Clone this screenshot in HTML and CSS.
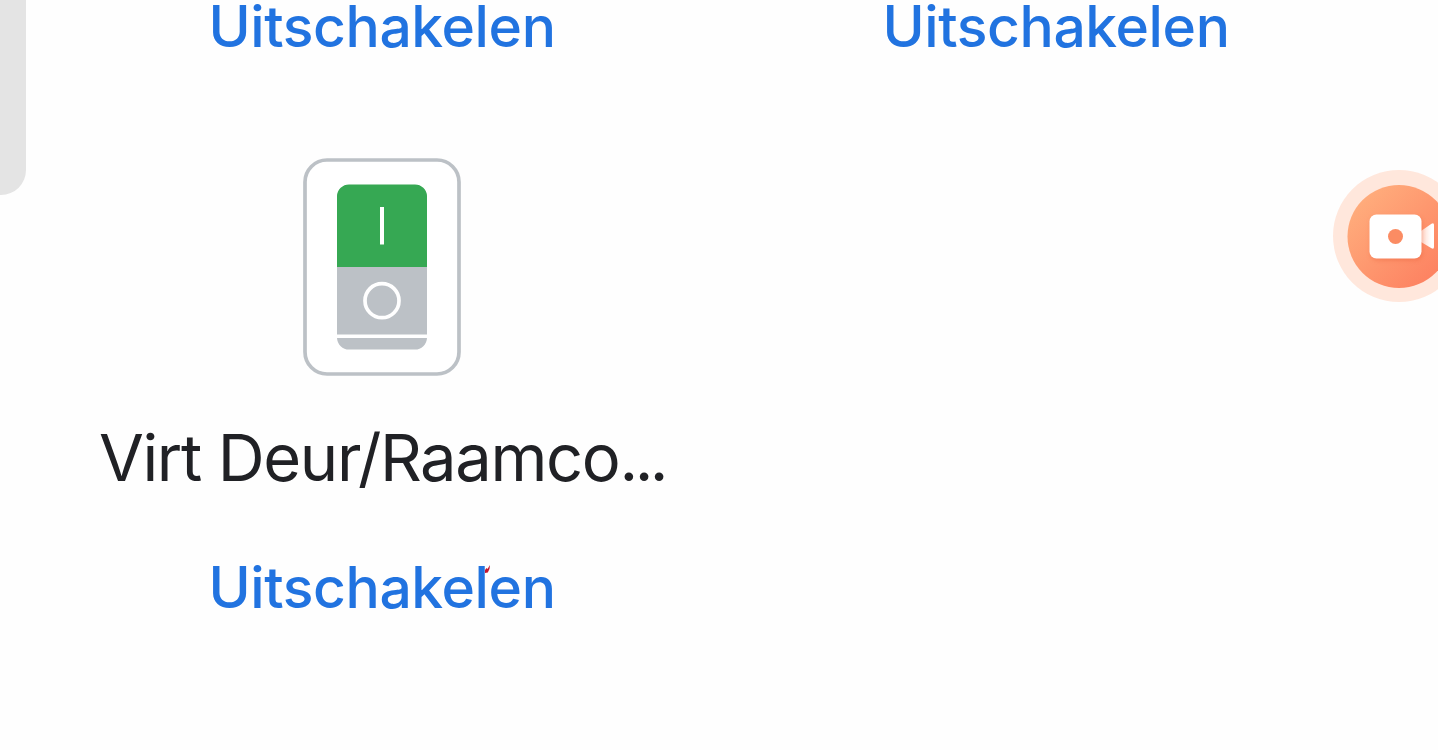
FILE: index.html
```html
<!DOCTYPE html>
<html lang="nl">
<head>
  <meta charset="UTF-8" />
  <meta name="viewport" content="width=device-width, initial-scale=1.0"/>
  <title>Apparaten</title>
  <link rel="stylesheet" href="styles.css">
</head>
<body>

  <!-- Edge panel handle -->
  <div class="edge-handle"></div>

  <!-- Devices -->
  <main class="devices">
    <div class="device">
      <a class="action">Uitschakelen</a>
    </div>
    <div class="device">
      <a class="action">Uitschakelen</a>
    </div>

    <div class="device">
      <svg class="switch-icon" viewBox="0 0 158 218">
        <rect x="2" y="2" width="154" height="214" rx="22" fill="#fff" stroke="#bcc1c6" stroke-width="3.700"/>
        <path d="M34 109V38a12 12 0 0 1 12-11.500h66a12 12 0 0 1 12 11.500v71z" fill="#36a853"/>
        <path d="M34 109h90v67.500H34z" fill="#bcc1c6"/>
        <path d="M34 180h90a12 12 0 0 1-12 11.500H46a12 12 0 0 1-12-11.500z" fill="#bcc1c6"/>
        <path d="M77 49h4v37.500h-4z" fill="#fff"/>
        <circle cx="79" cy="142.700" r="17" fill="none" stroke="#fff" stroke-width="3.700"/>
      </svg>
      <h2 class="name">Virt Deur/Raamco<span class="dots">...</span></h2>
      <a class="action marked">Uitschakelen
        <svg class="mark" viewBox="0 0 5 8"><path d="M5 0Q5 5 2.800 7.500L0 8V5L1.500 3L2.500 4Z" fill="#c5162e"/></svg>
      </a>
    </div>
  </main>

  <!-- Screen recorder bubble -->
  <div class="recorder">
    <svg class="recorder-icon" viewBox="0 0 132 132">
      <defs>
        <linearGradient id="orange" x1="0.1" y1="0.1" x2="0.9" y2="0.9">
          <stop offset="0" stop-color="#ffae7d"/>
          <stop offset="1" stop-color="#fd8060"/>
        </linearGradient>
        <linearGradient id="lens" x1="0" y1="0" x2="1" y2="0">
          <stop offset="0" stop-color="#ffd9cc"/>
          <stop offset="0.8" stop-color="#fff"/>
        </linearGradient>
      </defs>
      <circle cx="66" cy="66" r="66" fill="#ffe7dc"/>
      <circle cx="66" cy="66.500" r="51.500" fill="url(#orange)"/>
      <path d="M88 61l10.500-7.200q2.500-1.300 2.500 1.200v22q0 2.500-2.500 1.200L88 72z" fill="url(#lens)"/>
      <rect class="camera-body" x="36.500" y="44.500" width="52" height="44" rx="7"/>
      <circle cx="62.500" cy="66.500" r="7.500" fill="#fb8c63"/>
    </svg>
  </div>

</body>
</html>
```
FILE: styles.css
```css
* { margin: 0; padding: 0; box-sizing: border-box; }

body {
  height: 750px;
  background: #fefefe;
  font-family: Inter, "Open Sans", sans-serif;
  position: relative;
  overflow: hidden;
}

.edge-handle {
  position: absolute; top: 0; left: 0;
  width: 26px; height: 195px;
  background: #e4e4e4;
  border-bottom-right-radius: 25px;
}

.devices {
  display: grid;
  grid-template-columns: 674px 674px;
  row-gap: 104px;
  padding-left: 45px;
}

.device {
  display: flex;
  flex-direction: column;
  align-items: center;
}

.switch-icon { display: block; width: 158px; height: 218px; }

.name {
  margin-top: 43px;
  font-size: 65px; font-weight: 400; line-height: 78px;
  letter-spacing: -1.35px;
  color: #202125;
  white-space: nowrap;
}

.dots { letter-spacing: -3.5px; }

.action {
  font-size: 57px; font-weight: 500; line-height: 54px;
  letter-spacing: -0.4px;
  color: #2173e0;
  white-space: nowrap;
}

.name + .action { margin-top: 64px; }

.marked { position: relative; }
.mark {
  position: absolute; top: 4px; right: 66px;
  width: 5px; height: 8px;
}

.recorder {
  position: absolute; top: 170px; left: 1333px;
  width: 105px; height: 132px;
  overflow: hidden;
}

.recorder-icon { display: block; width: 132px; height: 132px; }

.camera-body {
  fill: #fff;
  filter: drop-shadow(1px 2px 2px rgba(225, 80, 40, 0.3));
}
```
